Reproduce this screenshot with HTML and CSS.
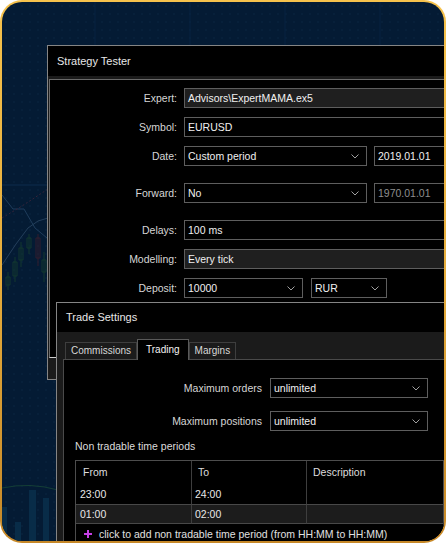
FILE: index.html
```html
<!DOCTYPE html>
<html>
<head>
<meta charset="utf-8">
<link rel="stylesheet" href="styles.css">
</head>
<body>
<div class="frame">
  <div class="desk">
    <svg class="backdrop" width="442" height="541" viewBox="0 0 442 541">
      <defs>
        <pattern id="dots" width="8" height="8" patternUnits="userSpaceOnUse">
          <rect x="3" y="3" width="2" height="2" fill="#0a2642"/>
        </pattern>
      </defs>
      <rect width="442" height="541" fill="url(#dots)" opacity="0.45"/>
      <path d="M93 0V541M188 0V541M283 0V541M378 0V541" stroke="#072240" stroke-width="1"/>
      <path d="M0 183H46" stroke="#0d2c4c" stroke-width="1"/>
      <polyline points="0,193 11,207 22,207 33,226 45,236" fill="none" stroke="#1f3d5c" stroke-width="1"/>
      <polyline points="0,263 14,242 26,226 36,219 46,216" fill="none" stroke="#243f5b" stroke-width="1"/>
      <polyline points="0,216 20,204 46,187" fill="none" stroke="#35243a" stroke-width="1" stroke-dasharray="2 2"/>
      <g stroke="#12382f" fill="none" stroke-width="1">
        <path d="M6 270v18M4 275h4v8h-4z"/>
        <path d="M13 255v25M11 260h4v14h-4z"/>
        <path d="M19 240v25M17 246h4v12h-4z"/>
        <path d="M27 232v20M25 236h4v10h-4z"/>
        <path d="M42 250v30M40 258h4v12h-4z"/>
      </g>
      <path d="M36 232v32M34 236h4v20h-4z" stroke="#331c2c" fill="none"/>
      <g fill="#082c48">
        <rect x="0" y="505" width="5" height="36"/>
        <rect x="13" y="520" width="6" height="21"/>
        <rect x="27" y="488" width="7" height="53"/>
        <rect x="41" y="496" width="6" height="45"/>
      </g>
      <path d="M0 486Q28 480 56 488" fill="none" stroke="#143f36" stroke-width="1"/>
    </svg>

    <section class="win tester">
      <header class="win-title">Strategy Tester</header>
      <div class="win-body">
        <div class="panel">
          <div class="row">
            <label>Expert:</label>
            <div class="ctrls"><div class="field ro wide">Advisors\ExpertMAMA.ex5</div></div>
          </div>
          <div class="row">
            <label>Symbol:</label>
            <div class="ctrls"><div class="field wide">EURUSD</div></div>
          </div>
          <div class="row gap">
            <label>Date:</label>
            <div class="ctrls">
              <div class="field select date-sel"><span>Custom period</span><svg class="chev" width="8" height="5" viewBox="0 0 8 5"><polyline points="0.5,0.5 4,4 7.5,0.5" fill="none" stroke="#a0a0a0" stroke-width="1"/></svg></div>
              <div class="field date">2019.01.01</div>
            </div>
          </div>
          <div class="row gap">
            <label>Forward:</label>
            <div class="ctrls">
              <div class="field select date-sel"><span>No</span><svg class="chev" width="8" height="5" viewBox="0 0 8 5"><polyline points="0.5,0.5 4,4 7.5,0.5" fill="none" stroke="#a0a0a0" stroke-width="1"/></svg></div>
              <div class="field date dim">1970.01.01</div>
            </div>
          </div>
          <div class="row">
            <label>Delays:</label>
            <div class="ctrls"><div class="field wide">100 ms</div></div>
          </div>
          <div class="row">
            <label>Modelling:</label>
            <div class="ctrls"><div class="field ro wide">Every tick</div></div>
          </div>
          <div class="row">
            <label>Deposit:</label>
            <div class="ctrls dep-ctrls">
              <div class="field select dep"><span>10000</span><svg class="chev" width="8" height="5" viewBox="0 0 8 5"><polyline points="0.5,0.5 4,4 7.5,0.5" fill="none" stroke="#a0a0a0" stroke-width="1"/></svg></div>
              <div class="field select cur"><span>RUR</span><svg class="chev" width="8" height="5" viewBox="0 0 8 5"><polyline points="0.5,0.5 4,4 7.5,0.5" fill="none" stroke="#a0a0a0" stroke-width="1"/></svg></div>
            </div>
          </div>
        </div>
      </div>
    </section>

    <section class="win trade">
      <header class="win-title trade-title">Trade Settings</header>
      <div class="win-body trade-body">
        <div class="tabs">
          <div class="tab">Commissions</div>
          <div class="tab active">Trading</div>
          <div class="tab">Margins</div>
        </div>
        <div class="tpanel">
          <div class="opts">
            <div class="opt-row">
              <label>Maximum orders</label>
              <div class="field select"><span>unlimited</span><svg class="chev" width="8" height="5" viewBox="0 0 8 5"><polyline points="0.5,0.5 4,4 7.5,0.5" fill="none" stroke="#a0a0a0" stroke-width="1"/></svg></div>
            </div>
            <div class="opt-row">
              <label>Maximum positions</label>
              <div class="field select"><span>unlimited</span><svg class="chev" width="8" height="5" viewBox="0 0 8 5"><polyline points="0.5,0.5 4,4 7.5,0.5" fill="none" stroke="#a0a0a0" stroke-width="1"/></svg></div>
            </div>
          </div>
          <div class="caption">Non tradable time periods</div>
          <div class="tbl">
            <div class="cell head">From</div>
            <div class="cell head sep">To</div>
            <div class="cell head sep">Description</div>
            <div class="cell">23:00</div>
            <div class="cell sep">24:00</div>
            <div class="cell sep"></div>
            <div class="cell alt">01:00</div>
            <div class="cell sep alt">02:00</div>
            <div class="cell sep alt"></div>
            <div class="add-row">
              <svg class="plus" width="8" height="8" viewBox="0 0 8 8"><path d="M4 0V8M0 4H8" stroke="#c53fe6" stroke-width="2"/></svg>
              <span>click to add non tradable time period (from HH:MM to HH:MM)</span>
            </div>
          </div>
        </div>
      </div>
    </section>
  </div>
</div>
</body>
</html>
```

FILE: styles.css
```css
html, body {
  margin: 0;
  padding: 0;
  background: #ffffff;
}

body {
  font-family: "Liberation Sans", Arial, sans-serif;
  font-size: 10.5px;
  color: #e2e2e2;
}

.frame {
  width: 446px;
  height: 543px;
  box-sizing: border-box;
  padding: 2px;
  border-radius: 22px;
  background: linear-gradient(180deg, #f6c24c 0%, #e6ad3c 50%, #c68828 100%);
}

.desk {
  position: relative;
  height: 100%;
  border-radius: 20px;
  background: #041b34;
  overflow: hidden;
}

.backdrop {
  position: absolute;
  left: 0;
  top: 0;
}

/* windows */
.win {
  position: absolute;
  box-sizing: border-box;
  border: 1px solid #858585;
  background: #000;
  display: flex;
  flex-direction: column;
}

.win-title {
  flex: none;
  height: 30px;
  line-height: 30px;
  padding-left: 9px;
  font-size: 11px;
  color: #e8e8e8;
  background: #000;
}

.win-body {
  flex: 1;
  background: #1b1b1b;
  padding: 3px 0 0 1px;
  display: flex;
  flex-direction: column;
}

.tester {
  left: 45px;
  top: 43px;
  width: 470px;
  height: 335px;
}

.panel {
  box-sizing: border-box;
  height: 279px;
  border: 1px solid #6a6a6a;
  border-right: none;
  border-bottom-color: #cfcfcf;
  background: #000;
  padding-top: 8px;
}

.row {
  display: grid;
  grid-template-columns: 127px auto;
  column-gap: 7px;
  align-items: center;
  height: 20px;
  margin-bottom: 9px;
}

.row.gap {
  margin-bottom: 17px;
}

label {
  text-align: right;
  color: #d6d6d6;
  white-space: nowrap;
}

.ctrls {
  display: flex;
  gap: 7px;
}

.dep-ctrls {
  gap: 8px;
}

.field {
  box-sizing: border-box;
  height: 20px;
  border: 1px solid #5e5e5e;
  background: #000;
  color: #f0f0f0;
  line-height: 18px;
  padding: 0 3px;
  white-space: nowrap;
}

.wide {
  width: 300px;
}

.ro {
  background: #1f1f1f;
}

.select {
  display: flex;
  align-items: center;
  justify-content: space-between;
  padding-right: 7px;
}

.chev {
  flex: none;
}

.date-sel {
  width: 183px;
}

.date {
  width: 100px;
}

.dim {
  color: #8e8e8e;
}

.dep {
  width: 119px;
}

.cur {
  width: 76px;
}

/* trade settings window */
.trade {
  left: 54px;
  top: 300px;
  width: 420px;
  height: 260px;
}

.trade-title {
  height: 29px;
  line-height: 28px;
}

.trade-body {
  padding: 7px 0 0 6px;
}

.tabs {
  display: flex;
  align-items: flex-end;
  height: 20px;
  padding-left: 2px;
  position: relative;
  z-index: 1;
}

.tab {
  box-sizing: border-box;
  height: 17px;
  border: 1px solid #3e3e3e;
  border-bottom: none;
  padding: 0 5px;
  font-size: 10px;
  line-height: 16px;
  color: #d8d8d8;
  background: #1b1b1b;
}

.tab.active {
  height: 21px;
  margin-bottom: -1px;
  padding: 0 8px;
  line-height: 19px;
  border-color: #5a5a5a;
  background: #000;
  color: #f4f4f4;
}

.tpanel {
  flex: 1;
  border: 1px solid #4a4a4a;
  border-right: none;
  background: #000;
  padding-top: 18px;
}

.opts {
  display: flex;
  flex-direction: column;
  gap: 13px;
}

.opt-row {
  display: grid;
  grid-template-columns: 198px 158px;
  column-gap: 8px;
  align-items: center;
  height: 20px;
}

.opt-row .field {
  padding-left: 3px;
}

.caption {
  margin: 8px 0 0 11px;
  line-height: 14px;
  color: #dcdcdc;
}

.tbl {
  margin: 7px 0 0 11px;
  width: 369px;
  box-sizing: border-box;
  border: 1px solid #4d4d4d;
  display: grid;
  grid-template-columns: 115px 115px 1fr;
}

.cell {
  height: 19px;
  line-height: 19px;
  padding-left: 4px;
  color: #e8e8e8;
  white-space: nowrap;
}

.cell.head {
  height: 24px;
  line-height: 22px;
  padding-left: 7px;
  color: #dedede;
}

.cell.head.sep {
  padding-left: 6px;
}

.cell.sep {
  border-left: 1px solid #3e3e3e;
  padding-left: 3px;
}

.cell.alt {
  height: 20px;
  box-sizing: border-box;
  line-height: 18px;
  background: #1c1c1c;
  border-top: 1px solid #484848;
  border-bottom: 1px solid #484848;
}

.add-row {
  grid-column: 1 / -1;
  height: 20px;
  display: flex;
  align-items: center;
  gap: 7px;
  padding-left: 8px;
  color: #e0e0e0;
  white-space: nowrap;
}

.plus {
  flex: none;
}
```
